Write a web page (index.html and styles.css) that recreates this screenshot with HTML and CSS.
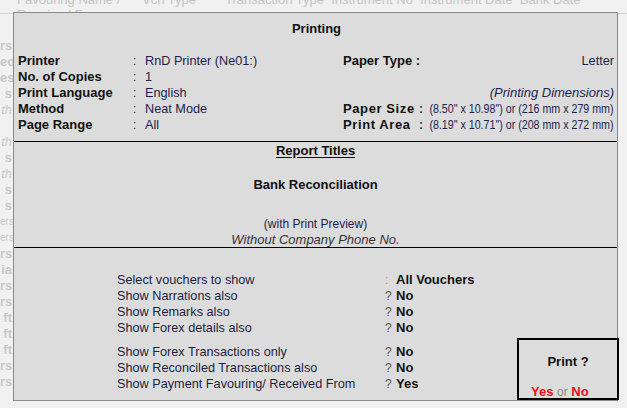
FILE: index.html
```html
<!DOCTYPE html>
<html>
<head>
<meta charset="utf-8">
<link rel="stylesheet" href="styles.css">
</head>
<body>
<div class="screen">
  <div class="colhead">
    <span class="ch ch1">Favouring Name /<br>Received From</span>
    <span class="ch ch2">Vch Type</span>
    <span class="ch ch3">Transaction Type&nbsp; Instrument No&nbsp; Instrument Date&nbsp; Bank Date</span>
  </div>
  <div class="leftcol">
    <div class="frag">rs</div><div class="frag">ed</div><div class="frag">es</div><div class="frag">s</div><div class="frag it">th</div>
    <div class="frag"></div>
    <div class="frag it">th</div><div class="frag">s</div><div class="frag it">th</div><div class="frag">s</div><div class="frag">s</div>
    <div class="frag sm">ers</div><div class="frag sm">ers</div><div class="frag">rs</div><div class="frag">ia</div><div class="frag">rs</div>
    <div class="frag">rs</div><div class="frag">ft</div><div class="frag">ft</div><div class="frag">ft</div><div class="frag">rs</div><div class="frag">rs</div>
  </div>

  <div class="panel">
    <section class="sec sec-print">
      <h1 class="title">Printing</h1>
      <div class="cols">
        <div class="grid-left">
          <span class="lbl">Printer</span><span class="sep">:</span><span class="val">RnD Printer (Ne01:)</span>
          <span class="lbl">No. of Copies</span><span class="sep">:</span><span class="val">1</span>
          <span class="lbl">Print Language</span><span class="sep">:</span><span class="val">English</span>
          <span class="lbl">Method</span><span class="sep">:</span><span class="val">Neat Mode</span>
          <span class="lbl">Page Range</span><span class="sep">:</span><span class="val">All</span>
        </div>
        <div class="grid-right">
          <div class="rrow"><span class="lbl">Paper Type :</span><span class="val right">Letter</span></div>
          <div class="rrow"></div>
          <div class="rrow"><span class="val right it">(Printing Dimensions)</span></div>
          <div class="rrow"><span class="lbl wide">Paper Size</span><span class="sep2">:</span><span class="dims"><span class="dtext">(8.50" x 10.98") or (216 mm x 279 mm)</span></span></div>
          <div class="rrow"><span class="lbl wide">Print Area</span><span class="sep2">:</span><span class="dims"><span class="dtext">(8.19" x 10.71") or (208 mm x 272 mm)</span></span></div>
        </div>
      </div>
    </section>
    <section class="sec sec-titles">
      <div class="rt">Report Titles</div>
      <div class="bank">Bank Reconciliation</div>
      <div class="sub">(with Print Preview)</div>
      <div class="sub it">Without Company Phone No.</div>
    </section>
    <section class="sec sec-opts">
      <div class="opts">
        <span class="olbl">Select vouchers to show</span><span class="osep dim">:</span><span class="oval">All Vouchers</span>
        <span class="olbl">Show Narrations also</span><span class="osep">?</span><span class="oval">No</span>
        <span class="olbl">Show Remarks also</span><span class="osep">?</span><span class="oval">No</span>
        <span class="olbl">Show Forex details also</span><span class="osep">?</span><span class="oval">No</span>
      </div>
      <div class="opts">
        <span class="olbl">Show Forex Transactions only</span><span class="osep">?</span><span class="oval">No</span>
        <span class="olbl">Show Reconciled Transactions also</span><span class="osep">?</span><span class="oval">No</span>
        <span class="olbl">Show Payment Favouring/ Received From</span><span class="osep">?</span><span class="oval">Yes</span>
      </div>
    </section>
    <div class="confirm">
      <div class="cq">Print ?</div>
      <div class="ca"><span class="yn">Yes</span> <span class="or">or</span> <span class="yn">No</span></div>
    </div>
  </div>
</div>
</body>
</html>
```
FILE: styles.css
```css
* { box-sizing: border-box; }
html, body { margin: 0; padding: 0; }
body {
  background: #f1f1f1;
  font-family: "Liberation Sans", Arial, sans-serif;
  width: 627px;
  height: 408px;
  overflow: hidden;
}
.screen { position: relative; width: 627px; height: 408px; overflow: hidden; }

.colhead {
  display: flex;
  height: 22px;
  border-bottom: 1px solid #d4d4d4;
  margin-top: -8px;
  color: #c4c4c4;
  font-size: 13px;
  line-height: 15px;
}
.ch { display: block; white-space: nowrap; }
.ch1 { margin-left: 17px; width: 125px; }
.ch2 { width: 83px; }

.leftcol {
  width: 13px;
  overflow: hidden;
  padding-top: 24px;
  color: #c8c8c8;
  font-weight: bold;
  font-size: 13px;
  line-height: 16px;
}
.frag { text-align: right; white-space: nowrap; padding-right: 1px; height: 16px; }
.frag.it { font-style: italic; font-weight: normal; }
.frag.sm { font-size: 10px; font-weight: normal; }

.panel {
  position: absolute;
  left: 13px;
  top: 12px;
  width: 605px;
  height: 389px;
  background: #dcdcdc;
  border: 1px solid #8a8a8a;
  color: #111;
}
.sec { border-bottom: 1px solid #000; }
.sec-opts { border-bottom: none; }

.sec-print { padding: 8px 2px 7px 4px; height: 129px; }
.title {
  margin: 0;
  font-size: 13px;
  font-weight: bold;
  text-align: center;
  line-height: 16px;
  height: 16px;
}
.cols {
  display: grid;
  grid-template-columns: 325px 271px;
  margin-top: 16px;
}
.grid-left {
  display: grid;
  grid-template-columns: 115px 12px 1fr;
  grid-auto-rows: 16px;
  line-height: 16px;
}
.lbl { font-weight: bold; font-size: 13px; white-space: nowrap; }
.sep { font-size: 12px; color: #333; }
.val { font-size: 12.7px; color: #1e1e4e; white-space: nowrap; }
.val.it { font-size: 13px; }
.it { font-style: italic; }

.grid-right { display: grid; grid-auto-rows: 16px; line-height: 16px; min-width: 0; }
.rrow { display: flex; align-items: baseline; white-space: nowrap; min-width: 0; }
.right { margin-left: auto; }
.wide { width: 76px; letter-spacing: 0.6px; }
.sep2 { font-size: 12px; color: #333; font-weight: bold; width: 11px; }
.dims {
  display: flex;
  justify-content: flex-end;
  width: 184px;
  min-width: 0;
}
.dtext {
  flex-shrink: 0;
  font-size: 13px;
  color: #1e1e4e;
  display: inline-block;
  transform: scaleX(0.82);
  transform-origin: right center;
}

.sec-titles {
  height: 106px;
  text-align: center;
  line-height: 16px;
}
.rt {
  display: inline-block;
  font-size: 13px;
  font-weight: bold;
  text-decoration: underline;
  text-underline-offset: 2px;
  height: 16px;
}
.bank { font-size: 13px; font-weight: bold; margin-top: 18px; }
.sub { font-size: 12px; color: #1e1e4e; }
.sec-titles .bank + .sub { margin-top: 23px; }
.sub.it { color: #333; font-size: 13px; }

.sec-opts { padding-top: 24px; padding-left: 103px; }
.opts {
  display: grid;
  grid-template-columns: 268px 11px 1fr;
  grid-auto-rows: 16px;
  line-height: 16px;
  font-size: 12.7px;
}
.opts + .opts { margin-top: 8px; }
.olbl { color: #1e1e3e; white-space: nowrap; }
.osep { color: #555; font-size: 12px; }
.osep.dim { color: #999; }
.oval { font-weight: bold; font-size: 13px; color: #111; }

.confirm {
  position: absolute;
  left: 503px;
  top: 325px;
  width: 102px;
  height: 62px;
  border: 2px solid #000;
  background: #dcdcdc;
  text-align: center;
}
.cq { font-size: 13px; font-weight: bold; margin-top: 14px; line-height: 16px; }
.ca { margin-top: 14px; line-height: 16px; font-size: 13px; text-align: left; padding-left: 12px; }
.yn { color: #e8101a; font-weight: bold; }
.or { color: #888; font-size: 12px; }
```
